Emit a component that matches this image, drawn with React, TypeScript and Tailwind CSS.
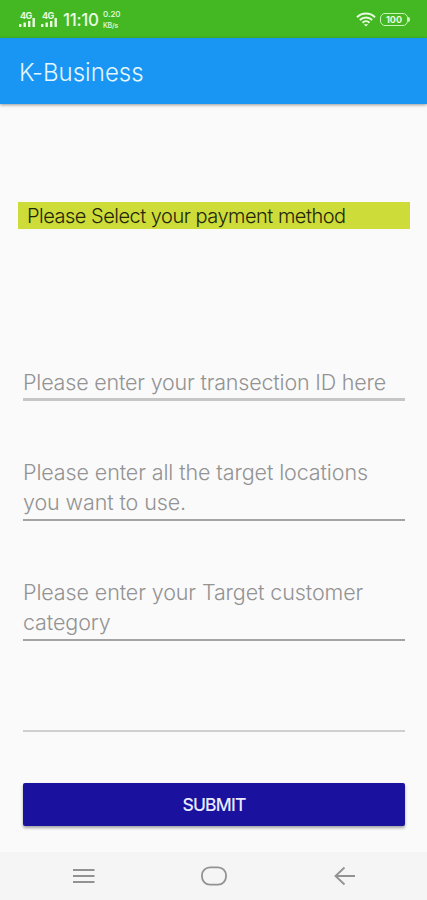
const fields = [
  { lines: ["Please enter your transection ID here"], box: "mt-[138px]", border: "border-b-[3px] border-[#c6c6c6]", height: "h-[34px]", tracking: "tracking-[-0.19px]" },
  { lines: ["Please enter all the target locations", "you want to use."], box: "mt-[56px]", border: "border-b-2 border-[#a3a3a3]", height: "h-[64px]", tracking: "tracking-[-0.11px]" },
  { lines: ["Please enter your Target customer", "category"], box: "mt-[56px]", border: "border-b-2 border-[#a3a3a3]", height: "h-[64px]", tracking: "tracking-[-0.11px]" },
  { lines: [], box: "mt-[57px]", border: "border-b-2 border-[#cfcfcf]", height: "h-[34px]", tracking: "tracking-normal" },
];

function Signal() {
  return (
    <div className="flex w-[18px] flex-col items-start">
      <span className="pl-px text-[9px] leading-[8px] font-bold tracking-[-0.5px]">4G</span>
      <svg width="17" height="9" viewBox="0 0 17 9" fill="currentColor" className="-mt-[2px]">
        <rect x="0" y="6" width="2.4" height="3" />
        <rect x="4.5" y="4.5" width="2.4" height="4.5" />
        <rect x="9" y="3" width="2.4" height="6" />
        <rect x="13.5" y="0" width="2.4" height="9" />
      </svg>
    </div>
  );
}

function StatusBar() {
  return (
    <div className="flex h-[38px] items-center bg-[#43b823] pr-[17px] pl-[19px] text-[#e9fbe0]">
      <div className="flex gap-[4px]">
        <Signal />
        <Signal />
      </div>
      <span className="ml-[4px] w-[37px] pt-[2px] text-[17px] leading-none font-medium tracking-[-0.3px] whitespace-nowrap">11:10</span>
      <div className="ml-[3px] flex flex-col pt-px text-[8px] leading-[11px] font-medium">
        <span>0.20</span>
        <span className="text-[7px] tracking-[-0.2px]">KB/s</span>
      </div>
      <svg width="20" height="15" viewBox="0 0 20 15" fill="none" stroke="currentColor" strokeWidth="2" className="ml-auto">
        <path d="M1 5.2C6 .2 14 .2 19 5.2" />
        <path d="M3.8 8c3.6-3.4 8.8-3.4 12.4 0" />
        <path d="M6.5 10.7c2-1.9 5-1.9 7 0" />
        <path d="M7.8 12.2h4.4L10 14.5z" fill="currentColor" stroke="none" />
      </svg>
      <div className="ml-[4px] flex items-center">
        <div className="flex h-[13px] w-[28px] items-center justify-center rounded-[5px] border border-[#c9f2b8] text-[9px] leading-none font-bold">
          100
        </div>
        <div className="h-[5px] w-[2px] rounded-r bg-[#c9f2b8]" />
      </div>
    </div>
  );
}

function NavBar() {
  return (
    <nav className="flex h-[48px] items-center bg-[#f5f5f5] pl-[72px] text-[#929292]">
      <svg width="24" height="24" viewBox="0 0 24 24" fill="none" stroke="currentColor" strokeWidth="1.8">
        <path d="M1 6h21.5M1 12h21.5M1 18h21.5" />
      </svg>
      <svg width="28" height="24" viewBox="0 0 28 24" fill="none" stroke="currentColor" strokeWidth="1.8" className="ml-[104px]">
        <rect x="2" y="3.3" width="24" height="17.4" rx="8" />
      </svg>
      <svg width="24" height="24" viewBox="0 0 24 24" fill="none" stroke="currentColor" strokeWidth="1.8" className="ml-[105px]">
        <path d="M22 12H2.5M11.5 3.5L2.5 12l9 8.5" />
      </svg>
    </nav>
  );
}

export default function App() {
  return (
    <div className="flex h-[900px] w-[427px] flex-col overflow-hidden bg-[#fafafa] font-['Inter',sans-serif]">
      <StatusBar />
      <header className="flex h-[66px] items-center bg-[#1996f3] pt-[4px] pl-[19px] shadow-[0_1px_3px_rgba(0,0,0,0.4)]">
        <h1 className="text-[24px] font-light tracking-[0.04px] text-[#e4f6ff]">K-Business</h1>
      </header>

      <main className="flex flex-1 flex-col pt-[98px]">
        <div className="mr-[17px] ml-[18px] flex h-[27px] items-center bg-[#cddc39] pl-[9px] text-[20px] font-light tracking-[-0.5px] whitespace-nowrap text-[#23260a]">
          Please Select your payment method
        </div>

        {fields.map(({ lines, box, border, height, tracking }, i) => (
          <div
            key={i}
            className={`mr-[22px] ml-[23px] text-[21.5px] leading-[30px] font-light whitespace-nowrap text-[#939393] ${box} ${border} ${height} ${tracking}`}
          >
            {lines.map((line) => (
              <p key={line}>{line}</p>
            ))}
          </div>
        ))}

        <button className="mt-[51px] mr-[22px] ml-[23px] h-[43px] rounded-[2px] bg-[#1a119f] pt-[2px] text-[17.5px] font-medium tracking-[-0.8px] text-[#e8eaff] shadow-[0_2px_3px_rgba(0,0,0,0.35)]">
          SUBMIT
        </button>
      </main>

      <NavBar />
    </div>
  );
}
